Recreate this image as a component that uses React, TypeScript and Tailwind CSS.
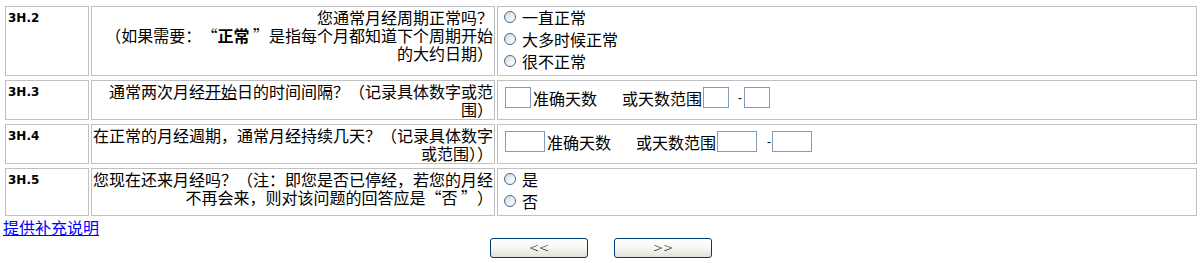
import React from "react";

const cell = "border border-[#c0c0c0] p-[1px]";
const cjk = "font-['Noto_Sans_CJK_SC',sans-serif]";

function Radio({ label }: { label: string }) {
  return (
    <div className="flex h-[22px] items-start">
      <span className="ml-[5px] mr-[6px] mt-[3px] box-border h-[12px] w-[12px] shrink-0 rounded-full border border-[#3c6a96] bg-linear-to-br from-[#d4d4d0] via-[#f0f0ee] to-white" />
      <span className="whitespace-nowrap leading-[18px]">{label}</span>
    </div>
  );
}

function Box({ w }: { w: string }) {
  return (
    <input
      type="text"
      readOnly
      className={`box-border h-[21px] ${w} shrink-0 border border-[#7f9db9] bg-white outline-none`}
    />
  );
}

function Label({ id }: { id: string }) {
  return (
    <div className={cell}>
      <div className="pl-[1px] pt-[1px] font-['DejaVu_Sans',Verdana,sans-serif] text-[12px] font-bold leading-[18px] text-black">
        {id}
      </div>
    </div>
  );
}

function Row({ children }: { children: React.ReactNode }) {
  return <div className="grid grid-cols-[84px_404px_700px] gap-[2px] p-[2px]">{children}</div>;
}

function LQ() {
  return <span className="inline-block w-[16px] text-right">“</span>;
}
function RQ() {
  return <span className="inline-block w-[16px] text-left">”</span>;
}

export default function App() {
  return (
    <div className={`min-h-[263px] bg-white pl-[3px] pt-[4px] text-[16px] text-black ${cjk}`}>
      <Row>
        <Label id="3H.2" />
        <div className={cell}>
          <div className="whitespace-nowrap text-right leading-[18px]">
            <div>您通常月经周期正常吗？</div>
            <div>
              （如果需要：<LQ />
              <b>正常</b> <RQ />是指每个月都知道下个周期开始
            </div>
            <div>的大约日期）</div>
          </div>
        </div>
        <div className={cell}>
          <Radio label="一直正常" />
          <Radio label="大多时候正常" />
          <Radio label="很不正常" />
        </div>
      </Row>

      <Row>
        <Label id="3H.3" />
        <div className={cell}>
          <div className="whitespace-nowrap text-right leading-[18px]">
            <div>
              通常两次月经<span className="underline">开始</span>日的时间间隔？（记录具体数字或范
            </div>
            <div>围）</div>
          </div>
        </div>
        <div className={cell}>
          <div className="mt-[5px] flex h-[21px] items-center whitespace-nowrap leading-[18px]">
            <span className="ml-[6px] flex">
              <Box w="w-[26px]" />
            </span>
            <span className="ml-[2px]">准确天数</span>
            <span className="ml-[25px]">或天数范围</span>
            <span className="ml-[1px] flex">
              <Box w="w-[26px]" />
            </span>
            <span className="ml-[9px] w-[4px] font-['Liberation_Sans',sans-serif] text-[12px]">-</span>
            <span className="ml-[2px] flex">
              <Box w="w-[26px]" />
            </span>
          </div>
        </div>
      </Row>

      <Row>
        <Label id="3H.4" />
        <div className={cell}>
          <div className="whitespace-nowrap text-right leading-[18px]">
            <div>在正常的月经週期，通常月经持续几天？（记录具体数字</div>
            <div>或范围））</div>
          </div>
        </div>
        <div className={cell}>
          <div className="mt-[5px] flex h-[21px] items-center whitespace-nowrap leading-[18px]">
            <span className="ml-[6px] flex">
              <Box w="w-[40px]" />
            </span>
            <span className="ml-[2px]">准确天数</span>
            <span className="ml-[25px]">或天数范围</span>
            <span className="ml-[1px] flex">
              <Box w="w-[40px]" />
            </span>
            <span className="ml-[10px] w-[4px] font-['Liberation_Sans',sans-serif] text-[12px]">-</span>
            <span className="ml-[1px] flex">
              <Box w="w-[40px]" />
            </span>
          </div>
        </div>
      </Row>

      <Row>
        <Label id="3H.5" />
        <div className={cell}>
          <div className="whitespace-nowrap text-right leading-[18px]">
            <div>您现在还来月经吗？（注：即您是否已停经，若您的月经</div>
            <div>
              不再会来，则对该问题的回答应是<LQ />否 <RQ />）
            </div>
          </div>
        </div>
        <div className={cell}>
          <Radio label="是" />
          <Radio label="否" />
        </div>
      </Row>

      <div className="leading-[18px]">
        <a href="#" className="text-[#0000ff] underline">
          提供补充说明
        </a>
      </div>

      <div className="flex justify-center gap-[26px] pr-[1px] pt-[2px]">
        <button className="box-border h-[20px] w-[98px] rounded-[3px] border border-[#003c74] bg-linear-to-b from-white via-[#f6f6f3] to-[#e3e1d6] font-['DejaVu_Sans',sans-serif] text-[12px] font-light leading-none text-black">
          &lt;&lt;
        </button>
        <button className="box-border h-[20px] w-[98px] rounded-[3px] border border-[#003c74] bg-linear-to-b from-white via-[#f6f6f3] to-[#e3e1d6] font-['DejaVu_Sans',sans-serif] text-[12px] font-light leading-none text-black">
          &gt;&gt;
        </button>
      </div>
    </div>
  );
}
